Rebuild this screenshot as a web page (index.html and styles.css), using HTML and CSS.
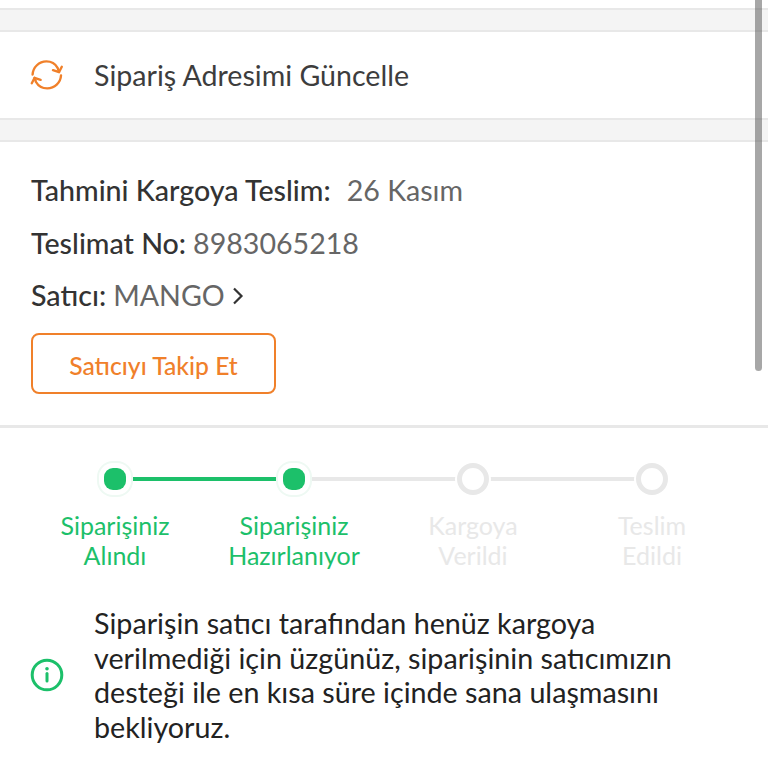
FILE: index.html
```html
<!DOCTYPE html>
<html lang="tr">
<head>
<meta charset="utf-8">
<title>Sipariş</title>
<link rel="stylesheet" href="styles.css">
</head>
<body>
<div class="top"></div>
<div class="gap"></div>
<div class="update">
  <svg class="sync" viewBox="0 0 34 34" width="34" height="34" fill="none" stroke="#f0802a" stroke-width="2.4" stroke-linecap="round" stroke-linejoin="round">
    <path d="M2.6 16.5C3 9.3 9 3.4 16.4 3.4c4.6 0 8.8 2.2 11.2 6.4l1.4 4"/>
    <path d="M31.8 8.8 29 14.2l-6-2"/>
    <path d="M31 17.5C30.6 24.7 24.6 30.4 17.2 30.4c-4.6 0-8.8-2.2-11.2-6.4l-1.4-4"/>
    <path d="M1.8 25.2 4.6 19.8l6 2"/>
  </svg>
  <span class="update-text">Sipariş Adresimi Güncelle</span>
</div>
<div class="gap"></div>
<section class="info">
  <p class="row"><b>Tahmini Kargoya Teslim:</b><span class="val val-wide">26 Kasım</span></p>
  <p class="row"><b>Teslimat No:</b><span class="val">8983065218</span></p>
  <p class="row"><b>Satıcı:</b><span class="val">MANGO</span>
    <svg class="chev" viewBox="0 0 12 20" width="12" height="20" fill="none" stroke="#333" stroke-width="2.2"><path d="M2 2.5 9.5 10 2 17.5"/></svg>
  </p>
  <button class="follow">Satıcıyı Takip Et</button>
</section>
<section class="status">
  <div class="track">
    <div class="step done"><span class="dot"></span><span class="label">Siparişiniz<br>Alındı</span></div>
    <div class="step done"><span class="dot"></span><span class="label">Siparişiniz<br>Hazırlanıyor</span></div>
    <div class="step"><span class="dot"></span><span class="label">Kargoya<br>Verildi</span></div>
    <div class="step"><span class="dot"></span><span class="label">Teslim<br>Edildi</span></div>
  </div>
  <div class="notice">
    <svg class="info-icon" viewBox="0 0 34 34" width="34" height="34" fill="none" stroke="#1cc06a">
      <circle cx="17" cy="17" r="14.8" stroke-width="3"/>
      <path d="M17 15.5v7.5" stroke-width="3" stroke-linecap="round"/>
      <circle cx="17" cy="10.8" r="1.8" fill="#1cc06a" stroke="none"/>
    </svg>
    <p class="notice-text">Siparişin satıcı tarafından henüz kargoya verilmediği için üzgünüz, siparişinin satıcımızın desteği ile en kısa süre içinde sana ulaşmasını bekliyoruz.</p>
  </div>
</section>
<div class="scrollbar"></div>
</body>
</html>
```
FILE: styles.css
```css
* { box-sizing: border-box; }
html, body { margin: 0; padding: 0; }
body {
  position: relative;
  width: 768px;
  height: 768px;
  overflow: hidden;
  background: #fff;
  font-family: Lato, "Noto Sans", sans-serif;
  color: #333;
}
.top { height: 8px; background: #fff; }
.gap {
  height: 24px;
  background: #f4f4f4;
  border-top: 2px solid #e8e8e8;
  border-bottom: 2px solid #e8e8e8;
}
.update {
  height: 86px;
  display: flex;
  align-items: center;
  padding-left: 30px;
}
.sync { flex: none; }
.update-text {
  margin-left: 30px;
  font-size: 28.6px;
  color: #3d3d3d;
}
.info {
  height: 286px;
  padding: 30px 0 0 31px;
  border-bottom: 3px solid #e8e8e8;
}
.row {
  margin: 0 0 16.5px;
  height: 36px;
  line-height: 36px;
  font-size: 28.6px;
  display: flex;
  align-items: center;
}
.row b { font-weight: 500; color: #333; }
.val { margin-left: 7px; color: #666; font-weight: 400; }
.val-wide { margin-left: 16px; }
.chev { margin-left: 7px; margin-top: 2px; }
.follow {
  display: block;
  width: 245px;
  height: 61px;
  margin-top: 20px;
  padding: 3px 0 0;
  background: #fff;
  border: 2px solid #f0802a;
  border-radius: 8px;
  color: #f0802a;
  font-family: inherit;
  font-size: 24.7px;
  font-weight: 500;
}
.status { padding-top: 32px; }
.track {
  display: grid;
  grid-template-columns: repeat(4, 179px);
  margin-left: 25.5px;
}
.step {
  position: relative;
  display: flex;
  flex-direction: column;
  align-items: center;
}
.step::after {
  content: "";
  position: absolute;
  top: 16.5px;
  left: 50%;
  width: 179px;
  height: 4px;
  background: #e8e8e8;
}
.step:last-child::after { display: none; }
.step:first-child::after { background: #1cc06a; }
.dot {
  position: relative;
  z-index: 1;
  width: 32px;
  height: 32px;
  margin: 2.5px 0;
  border-radius: 50%;
  background: #fff;
  border: 5px solid #e8e8e8;
  box-shadow: 0 0 0 2px #fff;
}
.done .dot {
  background: #1cc06a;
  border: 0;
  width: 22px;
  height: 22px;
  margin: 7.5px 0;
  border-radius: 9px;
  box-shadow: 0 0 0 5px #fff, 0 0 0 7px #eef9f3;
}
.label {
  margin-top: 13px;
  text-align: center;
  font-size: 25px;
  line-height: 30px;
  color: #e8e8e8;
  white-space: nowrap;
}
.done .label { color: #1cc06a; }
.notice {
  display: flex;
  align-items: center;
  margin-top: 36px;
  padding-left: 30px;
}
.info-icon { flex: none; }
.notice-text {
  margin: 0 0 0 30px;
  width: 601px;
  font-size: 28.7px;
  line-height: 34.7px;
  color: #222;
}
.scrollbar {
  position: absolute;
  top: 0;
  left: 755px;
  width: 7px;
  height: 371px;
  border-radius: 0 0 4px 4px;
  background: rgba(80, 80, 80, 0.5);
}
```
